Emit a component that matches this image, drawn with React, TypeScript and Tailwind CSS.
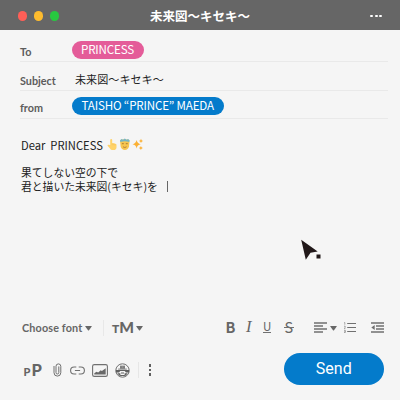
import type { ReactNode } from "react";
import { clsx } from "clsx";

const TITLE = "未来図〜キセキ〜";

function Field({ label, className, children }: { label: string; className?: string; children: ReactNode }) {
  return (
    <div className={clsx("ml-5 mr-3 flex border-b border-[#e9e9e9]", className)}>
      <span className="mt-[3px] w-[51.5px] shrink-0 font-['Lato',sans-serif] text-[10.8px] leading-[16px] font-bold text-[#5c5c5c]">
        {label}
      </span>
      {children}
    </div>
  );
}

function Pill({ className, children }: { className: string; children: ReactNode }) {
  return (
    <span
      className={clsx(
        "flex h-[17.5px] items-center justify-center rounded-full text-[11.6px] leading-none tracking-[-0.17px] whitespace-nowrap text-white",
        className,
      )}
    >
      {children}
    </span>
  );
}

function Caret({ className }: { className?: string }) {
  return (
    <svg viewBox="0 0 7 5" className={clsx("h-[5px] w-[7px] shrink-0 fill-[#676767]", className)} aria-hidden>
      <path d="M.6 0h5.8q.7 0 .3.6L4 4.3q-.5.6-1 0L.3.6Q-.1 0 .6 0z" />
    </svg>
  );
}

/* Emoji that follow the greeting */
function Emoji() {
  return (
    <svg viewBox="0 0 38 13" className="ml-[4px] h-[13px] w-[38px]" aria-hidden>
      <path
        d="M3.2 7V2q0-1.1 1-1.1t1 1.1v3.2q1-.4 1.5.1 1-.2 1.4.5 1.4-.1 1.4 1.2v2.2q0 2.8-3 2.8H5.2q-1.4 0-2.2-1.5L.6 7.7q-.3-1.2.9-1z"
        fill="#ffd36b"
      />
      <path d="M5.2 5.5v1.7M6.8 5.7v1.5M8.1 6.2v1.2" stroke="#eeb44b" strokeWidth=".4" />
      <path d="M13 3q0-1.7 4.8-1.7T22.6 3l-.6 5.6q-.9 3.4-4.2 3.4t-4.1-3.4z" fill="#f6c64f" />
      <path d="M13 2.2 14.5 1l1.6.7L17.8.6l1.7 1.1 1.6-.7 1.5 1.2-.4 1.7q-4.4-1.4-8.8 0z" fill="#76b6c5" />
      <path d="M14.9 5.7h1.9M18.8 5.7h1.9" stroke="#9b6727" strokeWidth=".8" />
      <path d="M16 8.8q1.8 1.4 3.6 0" stroke="#a4652f" strokeWidth=".7" fill="none" />
      <path
        d="M29.6 2.1q.6 3.6 4.2 4.2-3.6.6-4.2 4.2-.6-3.6-4.2-4.2 3.6-.6 4.2-4.2zM34 .8q.3 1.8 2 2.1-1.7.3-2 2.1-.3-1.8-2-2.1 1.7-.3 2-2.1zM33.9 8q.3 1.7 2 2-1.7.3-2 2-.3-1.7-2-2 1.7-.3 2-2z"
        fill="#fbb034"
      />
    </svg>
  );
}

function AlignIcon() {
  return (
    <svg viewBox="0 0 14 11" className="h-[11px] w-[14px] shrink-0" stroke="#707070" strokeWidth="1.3" aria-hidden>
      <path d="M0 1h13M0 4h9M0 7h13M0 10h9" />
    </svg>
  );
}

function NumberedIcon() {
  return (
    <svg viewBox="0 0 12 11" className="h-[11px] w-[12px] shrink-0" fill="none" stroke="#707070" aria-hidden>
      <path d="M3.2 1.5H12M3.2 5.5H12M3.2 9.5H12" strokeWidth="1.1" />
      <path d="M.2.5h.6v2.2M0 4.2h1.2v1L.2 6.6h1.2M0 8.3h1.3v2.2H0M.4 9.4h.9" strokeWidth=".6" />
    </svg>
  );
}

function OutdentIcon() {
  return (
    <svg viewBox="0 0 13 11" className="h-[11px] w-[13px] shrink-0" stroke="#707070" strokeWidth="1.3" aria-hidden>
      <path d="M0 1h13M5 4h8M5 7h8M0 10h13" />
      <path d="M.3 5.5 3.7 3v5z" fill="#707070" stroke="none" />
    </svg>
  );
}

function ClipIcon() {
  return (
    <svg viewBox="0 0 9 14" className="h-[14px] w-[9px] shrink-0" fill="none" stroke="#707070" aria-hidden>
      <path d="M1 3.4v6.3a3.4 3.4 0 0 0 6.8 0V3.3a2.4 2.4 0 0 0-4.8 0v6.3a1.4 1.4 0 0 0 2.8 0V3.8" strokeLinecap="round" />
    </svg>
  );
}

function LinkIcon() {
  return (
    <svg viewBox="0 0 15 9" className="h-[9px] w-[15px] shrink-0" fill="none" stroke="#707070" strokeWidth="1.1" aria-hidden>
      <path d="M6.3 1H4.1a3.5 3.5 0 0 0 0 7h2.2M8.7 1h2.2a3.5 3.5 0 0 1 0 7H8.7M4.9 4.5h5.2" />
    </svg>
  );
}

function PhotoIcon() {
  return (
    <svg viewBox="0 0 16 13" className="h-[13px] w-[16px] shrink-0" aria-hidden>
      <rect x=".6" y=".6" width="14.8" height="11.8" rx="1.7" fill="none" stroke="#707070" strokeWidth="1.1" />
      <path d="M2.3 10.4V9.2l2.2-1.5 1.7.9 2.5-2.3 1.2.8 3.8-2.8v6.1z" fill="#686868" />
    </svg>
  );
}

function FaceIcon() {
  return (
    <svg viewBox="0 0 15 15" className="h-[15px] w-[15px] shrink-0" aria-hidden>
      <circle cx="7.5" cy="7.5" r="6.7" fill="none" stroke="#707070" strokeWidth="1" />
      <path d="M.9 7h13.2v2.4H11L9.7 8H5.3L4 9.4H.9z" fill="#606060" />
      <path d="M5 2.6h5v3.2H5z" fill="#8c8c8c" />
      <path d="M6 3.4v1.4M9 3.4v1.4M3.2 6.1h8.6" stroke="#606060" strokeWidth=".8" />
      <path d="M2.3 10.2h3.1v2.4l-1 .2zM12.7 10.2H9.6v2.4l1 .2zM6 9.4h3v1.2H6zM5.3 11.9h4.4v1.2H5.3z" fill="#606060" />
    </svg>
  );
}

export default function App() {
  return (
    <div className="flex h-[400px] w-[400px] flex-col overflow-hidden bg-[#f5f5f5] font-['Noto_Sans_CJK_JP',sans-serif] text-[#222]">
      {/* Title bar */}
      <header className="flex h-[30px] shrink-0 items-center bg-[#666] pt-[2px] pr-[18px] pl-[18px]">
        <div className="flex w-[92px] gap-[6.6px]">
          <span className="size-[9.4px] rounded-full bg-[#ff5f57]" />
          <span className="size-[9.4px] rounded-full bg-[#febc2e]" />
          <span className="size-[9.4px] rounded-full bg-[#28c840]" />
        </div>
        <h1 className="flex-1 text-center text-[12.5px] leading-[18px] font-bold whitespace-nowrap text-white">{TITLE}</h1>
        <div className="flex w-[92px] justify-end gap-[1.6px]">
          <span className="size-[2.8px] rounded-full bg-white" />
          <span className="size-[2.8px] rounded-full bg-white" />
          <span className="size-[2.8px] rounded-full bg-white" />
        </div>
      </header>

      <Field label="To" className="h-[32px] pt-[11px]">
        <Pill className="w-[72px] bg-[#e45c99]">PRINCESS</Pill>
      </Field>
      <Field label="Subject" className="h-[29px] pt-[8px]">
        <span className="ml-[3.5px] text-[11.1px] leading-[18px] whitespace-nowrap">{TITLE}</span>
      </Field>
      <Field label="from" className="h-[28px] pt-[6px]">
        <Pill className="w-[152.5px] bg-[#047bcb]">TAISHO “PRINCE” MAEDA</Pill>
      </Field>

      {/* Message */}
      <main className="flex-1 pt-[19px] pl-[21px] text-[10.8px] leading-[14px] whitespace-pre">
        <p className="flex text-[11.2px]">
          Dear  PRINCESS
          <Emoji />
        </p>
        <p className="mt-[12.5px]">
          {"果てしない空の下で\n君と描いた未来図(キセキ)を"}
          <span className="ml-[9px] inline-block h-[11px] w-px bg-[#666] align-[-1.5px]" />
        </p>
        <svg viewBox="0 0 20 23" className="mt-[46px] ml-[280px] h-[23px] w-[20px] fill-[#211819]" aria-hidden>
          <path d="m.2.7 16.5 11.9-7.2 1.1L4.8 20.8zM15.5 15.6h4v4h-4z" />
        </svg>
      </main>

      {/* Text formatting */}
      <div className="flex h-[36px] shrink-0 items-center pb-[2px] pl-[22px] text-[#666]">
        <span className="mt-[2px] w-[60px] font-['Lato',sans-serif] text-[10.8px] font-bold tracking-[0.15px] whitespace-nowrap">
          Choose font
        </span>
        <Caret className="mt-[2px] ml-[3px]" />
        <span className="mt-[2px] ml-[11px] h-[16px] w-px bg-[#e8e8e8]" />
        <span className="mt-[2px] ml-[8px] flex w-[22px] items-baseline font-['Lato',sans-serif] font-black">
          <span className="text-[12px] leading-none">T</span>
          <span className="text-[15.5px] leading-none">M</span>
        </span>
        <Caret className="mt-[2px] ml-[2px]" />
        <span className="ml-[82.5px] w-[20.5px] text-[14.5px] leading-none font-bold">B</span>
        <span className="w-[17px] font-['Liberation_Serif',serif] text-[16.5px] leading-none italic">I</span>
        <span className="flex w-[20.5px] flex-col">
          <span className="text-[11.5px] leading-[11px]">U</span>
          <span className="h-px w-[7.5px] bg-[#707070]" />
        </span>
        <span className="relative w-[30px] pl-[1px] text-[14.5px] leading-none">
          S
          <span className="absolute top-[7px] left-0 h-px w-[10px] bg-[#707070]" />
        </span>
        <AlignIcon />
        <Caret className="mt-[3px] ml-[2.5px]" />
        <span className="w-[7px]" />
        <NumberedIcon />
        <span className="w-[14.5px]" />
        <OutdentIcon />
      </div>

      {/* Attachments and send */}
      <footer className="flex h-[54px] shrink-0 items-center pb-[6px] pl-[23.5px] text-[#666]">
        <span className="flex w-[29px] items-baseline gap-px font-['Lato',sans-serif] font-black">
          <span className="text-[11px] leading-none">P</span>
          <span className="text-[16.5px] leading-none">P</span>
        </span>
        <ClipIcon />
        <span className="w-[8.5px]" />
        <LinkIcon />
        <span className="w-[7px]" />
        <PhotoIcon />
        <span className="w-[7px]" />
        <FaceIcon />
        <span className="ml-[8px] h-[16px] w-px bg-[#e6e6e6]" />
        <span className="ml-[10px] flex flex-col gap-[2.2px]">
          <span className="size-[2.4px] bg-[#606060]" />
          <span className="size-[2.4px] bg-[#606060]" />
          <span className="size-[2.4px] bg-[#606060]" />
        </span>
        <button
          type="button"
          className="mt-[-2px] mr-[16px] ml-auto h-[31.5px] w-[100.5px] rounded-full bg-[#047bcb] font-['Roboto',sans-serif] text-[16px] leading-none text-white"
        >
          Send
        </button>
      </footer>
    </div>
  );
}
